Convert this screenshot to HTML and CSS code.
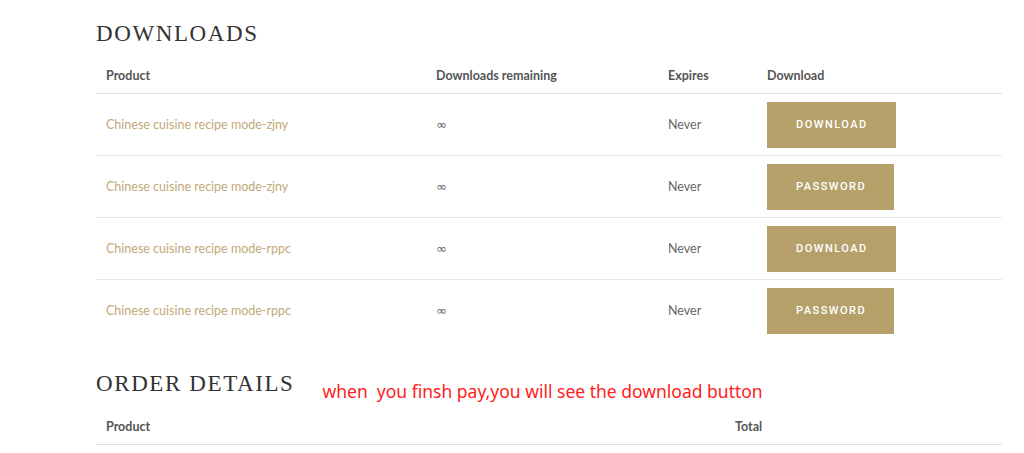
FILE: index.html
```html
<!DOCTYPE html>
<html lang="en">
<head>
    <meta charset="UTF-8">
    <meta name="viewport" content="width=device-width, initial-scale=1.0">
    <title>Order - Downloads</title>
    <link rel="stylesheet" href="styles.css">
</head>
<body>
    <div class="container">
        <!-- Downloads -->
        <section class="downloads">
            <h2 class="section-title">Downloads</h2>
            <table class="shop-table">
                <thead>
                    <tr>
                        <th class="col-product">Product</th>
                        <th class="col-remaining">Downloads remaining</th>
                        <th class="col-expires">Expires</th>
                        <th class="col-download">Download</th>
                    </tr>
                </thead>
                <tbody>
                    <tr>
                        <td><a href="#">Chinese cuisine recipe mode-zjny</a></td>
                        <td class="infinite">&infin;</td>
                        <td>Never</td>
                        <td><a class="button" href="#">Download</a></td>
                    </tr>
                    <tr>
                        <td><a href="#">Chinese cuisine recipe mode-zjny</a></td>
                        <td class="infinite">&infin;</td>
                        <td>Never</td>
                        <td><a class="button" href="#">Password</a></td>
                    </tr>
                    <tr>
                        <td><a href="#">Chinese cuisine recipe mode-rppc</a></td>
                        <td class="infinite">&infin;</td>
                        <td>Never</td>
                        <td><a class="button" href="#">Download</a></td>
                    </tr>
                    <tr>
                        <td><a href="#">Chinese cuisine recipe mode-rppc</a></td>
                        <td class="infinite">&infin;</td>
                        <td>Never</td>
                        <td><a class="button" href="#">Password</a></td>
                    </tr>
                </tbody>
            </table>
        </section>

        <!-- Order details -->
        <section class="order-details">
            <div class="title-row">
                <h2 class="section-title">Order details</h2>
                <span class="pay-note">when&nbsp; you finsh pay,you will see the download button</span>
            </div>
            <table class="shop-table">
                <thead>
                    <tr>
                        <th class="col-order-product">Product</th>
                        <th>Total</th>
                    </tr>
                </thead>
            </table>
        </section>
    </div>
</body>
</html>
```

FILE: styles.css
```css
* {
    box-sizing: border-box;
    margin: 0;
    padding: 0;
}

body {
    font-family: Lato, "Open Sans", sans-serif;
    background-color: #ffffff;
    color: #666666;
}

.container {
    width: 906px;
    margin-left: 96px;
    padding-top: 22px;
}

.section-title {
    font-family: "Liberation Serif", serif;
    font-weight: normal;
    font-size: 23px;
    letter-spacing: 1.6px;
    text-transform: uppercase;
    color: #333333;
    line-height: 24px;
}

.shop-table {
    width: 100%;
    border-collapse: collapse;
    margin-top: 22px;
    font-size: 12.5px;
}

.shop-table th {
    text-align: left;
    font-weight: bold;
    color: #555555;
    padding: 0 10px 9px;
    line-height: 16px;
    border-bottom: 1px solid #dde1e7;
}

.shop-table td {
    padding: 0 10px;
    height: 62px;
    border-bottom: 1px solid #e6e8ee;
    vertical-align: middle;
}

.shop-table tbody tr:last-child td {
    border-bottom: none;
}

.col-product {
    width: 330px;
}

.col-remaining {
    width: 232px;
}

.col-expires {
    width: 99px;
}

.shop-table td.infinite {
    font-family: "DejaVu Sans", sans-serif;
    font-size: 13px;
}

.shop-table td a {
    color: #c2a978;
    text-decoration: none;
}

.shop-table td a.button {
    display: inline-block;
    background-color: #b5a06a;
    color: #ffffff;
    font-family: Roboto, sans-serif;
    font-size: 11px;
    font-weight: 500;
    letter-spacing: 1.5px;
    text-transform: uppercase;
    line-height: 46px;
    padding: 0 28px 0 29px;
}

.order-details {
    margin-top: 30px;
}

.title-row {
    display: flex;
    align-items: flex-start;
    gap: 28px;
}

.pay-note {
    font-family: "Noto Sans", sans-serif;
    font-size: 17.5px;
    color: #ff2020;
    margin-top: 7px;
}

.order-details .shop-table {
    margin-top: 16px;
}

.col-order-product {
    width: 629px;
}
```
